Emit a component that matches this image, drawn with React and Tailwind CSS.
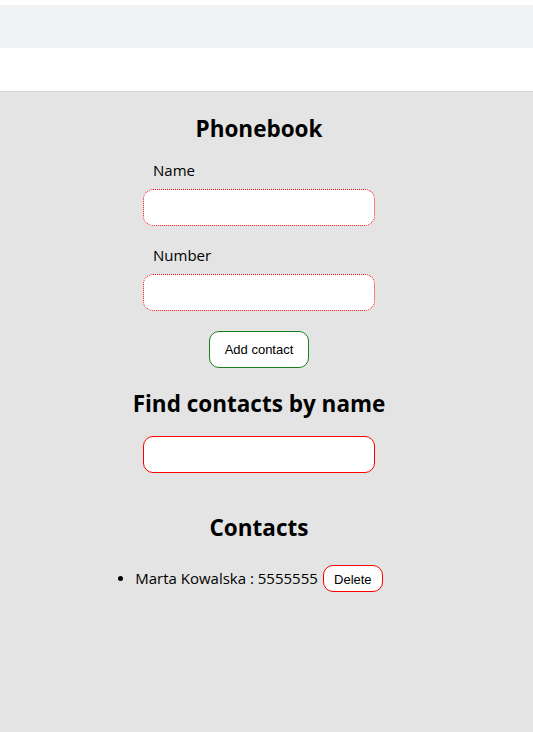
export default function App() {
  return (
    <div className="min-h-[732px] bg-[#e4e4e4] font-['Open_Sans',sans-serif] text-black">
      <div className="h-[5px] bg-white" />
      <div className="h-[43px] bg-[#f1f2f4]" />
      <div className="h-[44px] bg-white border-b border-[#d6d6d6]" />
      <div className="w-[518px] flex flex-col items-center">
        <h1 className="mt-[20px] h-[32px] leading-[34px] text-[22.5px] font-bold">Phonebook</h1>
        <div className="mt-[14px] w-[232px] flex flex-col">
          <label className="pl-[10px] h-[24px] leading-[24px] text-[15px]">Name</label>
          <input className="mt-[7px] h-[37px] w-[232px] bg-white rounded-[10px] border border-dotted border-[#f00000] outline-none" />
          <label className="mt-[17px] pl-[10px] h-[24px] leading-[24px] text-[15px]">Number</label>
          <input className="mt-[7px] h-[37px] w-[232px] bg-white rounded-[10px] border border-dotted border-[#f00000] outline-none" />
        </div>
        <button className="mt-[20px] h-[37px] w-[100px] bg-white rounded-[10px] border border-[#1a7f1a] text-[13px] font-['Liberation_Sans',sans-serif]">Add contact</button>
        <h2 className="mt-[19px] h-[32px] leading-[34px] text-[22.5px] font-bold">Find contacts by name</h2>
        <input className="mt-[17px] h-[37px] w-[232px] bg-white rounded-[10px] border border-[#ff0000] outline-none" />
        <h2 className="mt-[38px] h-[32px] leading-[34px] text-[22.5px] font-bold">Contacts</h2>
        <ul className="mt-[21px] list-disc pl-0">
          <li className="text-[15px] leading-[27px]">
            <span className="align-middle">Marta Kowalska : 5555555</span>
            <button className="ml-[5px] h-[27px] w-[60px] bg-white rounded-[10px] border border-[#ff0000] text-[13px] font-['Liberation_Sans',sans-serif] align-middle">Delete</button>
          </li>
        </ul>
      </div>
    </div>
  );
}
